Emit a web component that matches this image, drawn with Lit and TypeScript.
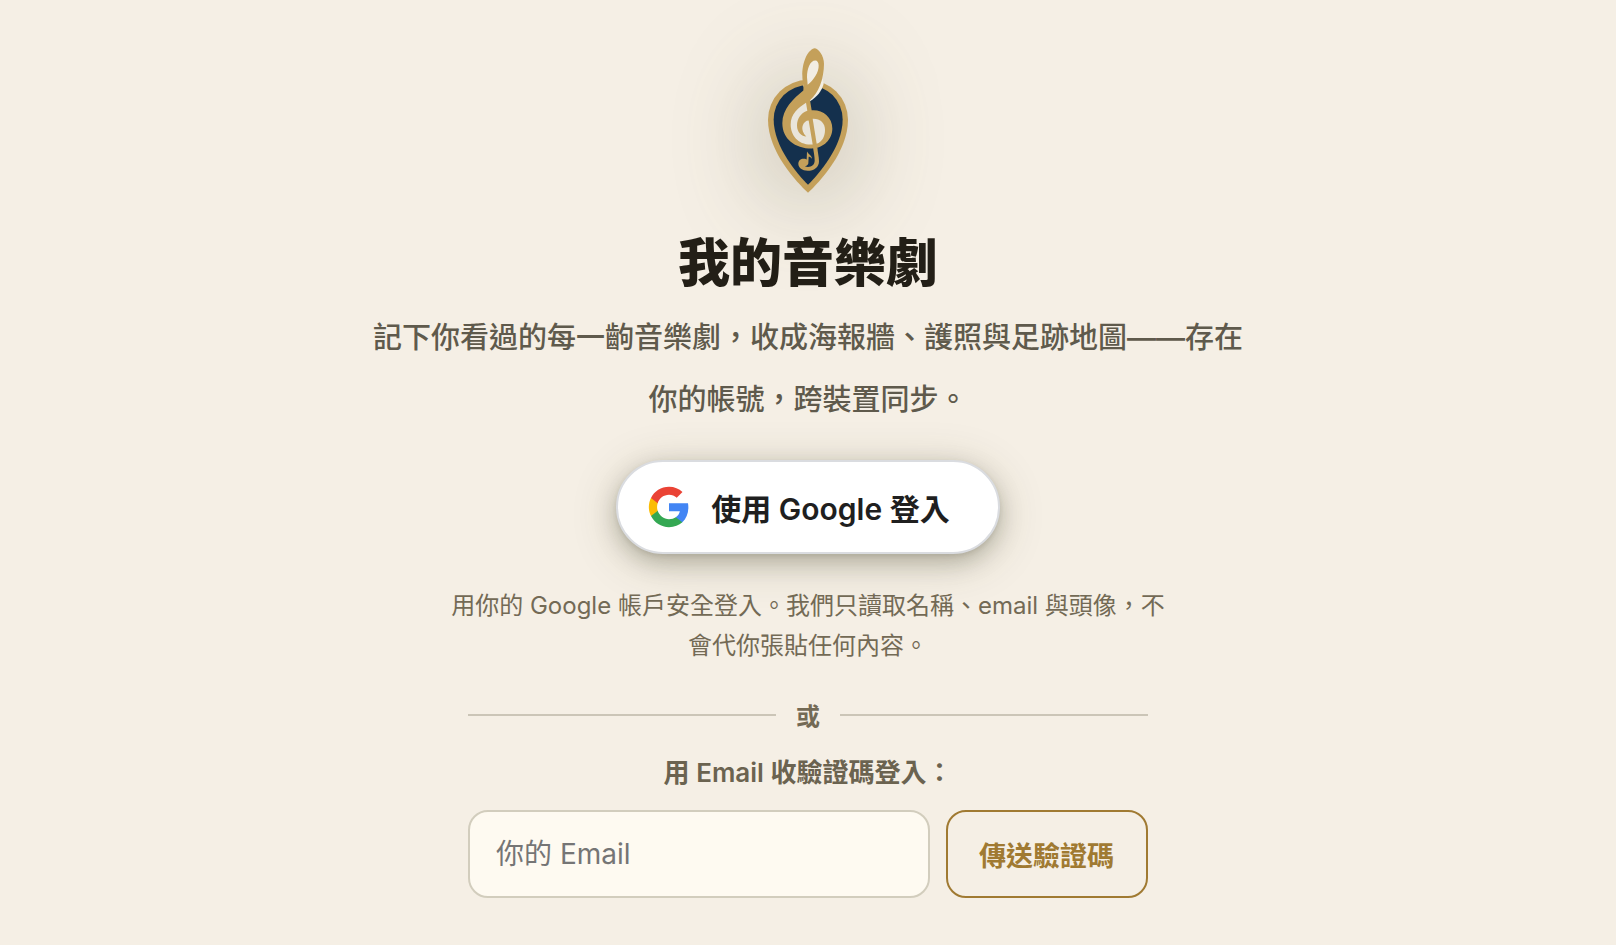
import { LitElement, html, css } from "lit";
import { customElement, state } from "lit/decorators.js";

@customElement("brand-mark")
class BrandMark extends LitElement {
  static styles = css`
    :host {
      display: block;
    }
    .mark {
      display: block;
      width: 80px;
      height: 145px;
      overflow: visible;
      filter: drop-shadow(0 14px 48px rgba(70, 70, 36, 0.36));
    }
  `;

  render() {
    return html`
      <svg class="mark" viewBox="294 143 240 434" role="img" aria-label="我的音樂劇">
        <path
          fill="#c4a05a"
          d="M414 577C380 545 294 455 294 358A120 120 0 0 1 534 358C534 455 448 545 414 577Z"
        />
        <path
          fill="#14304d"
          d="M414 553C384 523 311 440 311 357A103.500 103.500 0 0 1 518 357C518 440 444 523 414 553Z"
        />
        <path
          fill="#f3efe5"
          d="M400 236L458 236L461 250C456 270 442 290 420 302L400 256Z"
        />
        <path
          fill="#c4a05a"
          d="M433 143C410 150 396 190 397 225C397 245 402 256 400 270C370 295 337 325 337 368C337 415 375 444 425 444C462 444 487 415 487 385C487 350 460 329 430 329L425 329L420 299C445 280 462 235 462 190C462 165 445 143 433 143Z"
        />
        <path
          fill="#f2ede3"
          d="M436 180C420 180 411 205 411 230L413 253C430 240 447 215 446 195C446 186 442 180 436 180Z"
        />
        <path
          fill="#e9e5da"
          d="M408 307L412 331C392 338 381 355 381 375C381 395 395 408 409 408C399 399 395 386 398 376C401 366 408 360 416 360L428 432C385 435 362 405 362 372C362 340 385 322 408 307Z"
        />
        <path
          fill="#e9e5da"
          d="M428 355L440 430C456 425 465 408 465 388C465 368 450 354 428 355Z"
        />
        <path
          fill="#c4a05a"
          d="M429 440L442 440C443 455 447 468 447 482C447 500 432 511 413 511C397 511 385 502 385 490C385 479 394 473 405 475L410 477L411 453C416 463 425 464 426 475C422 470 418 469 416 469L415 489C414 494 408 497 405 498C420 502 434 496 434 480C434 466 431 455 429 440Z"
        />
      </svg>
    `;
  }
}

@customElement("app-root")
class AppRoot extends LitElement {
  @state() private email = "";

  static styles = css`
    :host {
      display: block;
      min-height: 100vh;
      box-sizing: border-box;
      background: #f5efe5;
      color: #231f17;
      font-family: Inter, "Noto Sans CJK TC", sans-serif;
    }
    *,
    *::before,
    *::after {
      box-sizing: border-box;
    }
    .page {
      display: flex;
      flex-direction: column;
      align-items: center;
      padding: 48px 24px;
      text-align: center;
    }
    .title {
      margin: 33px 0 0;
      font-size: 52px;
      line-height: 76px;
      font-weight: 800;
    }
    .intro {
      max-width: 880px;
      margin: 5px 0 0;
      font-size: 29px;
      line-height: 62px;
      font-weight: 500;
      color: #5f5a4c;
    }
    .google {
      display: flex;
      align-items: center;
      gap: 20px;
      height: 94px;
      margin-top: 29px;
      padding: 0 48px 0 29px;
      border: 2px solid #dadce0;
      border-radius: 47px;
      background: #fff;
      color: #1f1f1f;
      font: inherit;
      font-size: 30px;
      font-weight: 600;
      cursor: pointer;
      box-shadow:
        0 2px 4px rgba(60, 60, 40, 0.1),
        0 8px 22px rgba(60, 60, 40, 0.26),
        0 8px 48px rgba(64, 64, 30, 0.2);
    }
    .google-icon {
      width: 44px;
      height: 44px;
    }
    .note {
      max-width: 720px;
      margin: 32px 0 0;
      font-size: 24px;
      line-height: 40px;
      color: #736a55;
    }
    .form {
      width: 100%;
      max-width: 680px;
      margin-top: 31px;
    }
    .divider {
      display: flex;
      align-items: center;
      gap: 20px;
      font-size: 24px;
      line-height: 40px;
      font-weight: 600;
      color: #736a55;
    }
    .divider::before,
    .divider::after {
      content: "";
      flex: 1;
      height: 2px;
      margin-bottom: 4px;
      background: #cbc5b7;
    }
    .label {
      display: block;
      margin-top: 16px;
      font-size: 26px;
      line-height: 40px;
      font-weight: 600;
      color: #6b6350;
    }
    .row {
      display: flex;
      gap: 16px;
      margin-top: 17px;
    }
    .email {
      flex: 1;
      min-width: 0;
      height: 88px;
      padding: 0 26px;
      border: 2px solid #d2cdbd;
      border-radius: 20px;
      background: #fefaf1;
      color: #231f17;
      font: inherit;
      font-size: 28px;
    }
    .email::placeholder {
      color: #757575;
    }
    .send {
      height: 88px;
      padding: 0 32px 0 31px;
      border: 2px solid #a07a32;
      border-radius: 20px;
      background: transparent;
      color: #a07a32;
      font: inherit;
      font-size: 27px;
      font-weight: 700;
      white-space: nowrap;
      cursor: pointer;
    }
  `;

  private onInput(e: Event) {
    this.email = (e.target as HTMLInputElement).value;
  }

  render() {
    return html`
      <main class="page" lang="zh-Hant">
        <brand-mark></brand-mark>
        <h1 class="title">我的音樂劇</h1>
        <p class="intro">
          記下你看過的每一齣音樂劇，收成海報牆、護照與足跡地圖——存在你的帳號，跨裝置同步。
        </p>
        <button class="google" type="button">
          <svg class="google-icon" viewBox="0 0 24 24" aria-hidden="true">
            <path
              fill="#4285F4"
              d="M22.56 12.25c0-.78-.07-1.53-.2-2.25H12v4.26h5.92c-.26 1.37-1.04 2.53-2.21 3.31v2.77h3.57c2.08-1.92 3.28-4.74 3.28-8.09z"
            />
            <path
              fill="#34A853"
              d="M12 23c2.97 0 5.46-.98 7.28-2.66l-3.57-2.77c-.98.66-2.23 1.06-3.71 1.06-2.86 0-5.29-1.93-6.16-4.53H2.18v2.84C3.99 20.53 7.700 23 12 23z"
            />
            <path
              fill="#FBBC05"
              d="M5.84 14.09c-.22-.66-.35-1.360-.35-2.090s.13-1.430.35-2.090V7.070H2.18C1.430 8.550 1 10.220 1 12s.43 3.450 1.180 4.930l2.850-2.220.81-.62z"
            />
            <path
              fill="#EA4335"
              d="M12 5.380c1.620 0 3.060.56 4.210 1.640l3.150-3.150C17.450 2.090 14.970 1 12 1 7.700 1 3.990 3.470 2.180 7.070l3.660 2.840c.87-2.600 3.300-4.530 6.160-4.530z"
            />
          </svg>
          <span>使用 Google 登入</span>
        </button>
        <p class="note">
          用你的 Google 帳戶安全登入。我們只讀取名稱、email 與頭像，不會代你張貼任何內容。
        </p>
        <form class="form" @submit=${(e: Event) => e.preventDefault()}>
          <div class="divider">或</div>
          <label class="label" for="email">用 Email 收驗證碼登入：</label>
          <div class="row">
            <input
              class="email"
              id="email"
              type="email"
              placeholder="你的 Email"
              .value=${this.email}
              @input=${this.onInput}
            />
            <button class="send" type="submit">傳送驗證碼</button>
          </div>
        </form>
      </main>
    `;
  }
}
